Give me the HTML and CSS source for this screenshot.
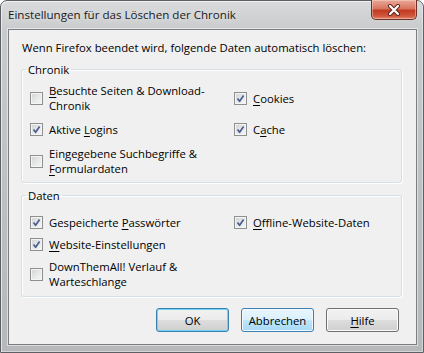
FILE: index.html
```html
<!DOCTYPE html>
<html lang="de">
<head>
    <meta charset="utf-8" />
    <title>Einstellungen für das Löschen der Chronik</title>
    <link rel="stylesheet" href="styles.css">
</head>
<body>
    <div class="window">
        <div class="titlebar">
            <span class="title">Einstellungen für das Löschen der Chronik</span>
            <span class="close">
                <svg width="14" height="12" viewBox="0 0 14 12">
                    <path d="M3 2 L11 10 M11 2 L3 10" stroke="#5a2418" stroke-width="4" stroke-linecap="round" fill="none" />
                    <path d="M3 2 L11 10 M11 2 L3 10" stroke="#ffffff" stroke-width="2.2" stroke-linecap="round" fill="none" />
                </svg>
            </span>
        </div>

        <div class="client">
            <p class="intro">Wenn Firefox beendet wird, folgende Daten automatisch löschen:</p>

            <fieldset class="group chronik">
                <legend>Chronik</legend>
                <div class="grid">
                    <label class="item"><span class="cb"></span><span><u>B</u>esuchte Seiten &amp; Download-<br>Chronik</span></label>
                    <label class="item"><span class="cb on"><svg viewBox="0 0 11 11"><path d="M2.5 5.5 L4.6 8.3 L8.6 2.4" /></svg></span><span><u>C</u>ookies</span></label>
                    <label class="item"><span class="cb on"><svg viewBox="0 0 11 11"><path d="M2.5 5.5 L4.6 8.3 L8.6 2.4" /></svg></span><span>Aktive <u>L</u>ogins</span></label>
                    <label class="item"><span class="cb on"><svg viewBox="0 0 11 11"><path d="M2.5 5.5 L4.6 8.3 L8.6 2.4" /></svg></span><span>C<u>a</u>che</span></label>
                    <label class="item"><span class="cb"></span><span>Eingegebene Suchbegriffe &amp;<br><u>F</u>ormulardaten</span></label>
                </div>
            </fieldset>

            <fieldset class="group daten">
                <legend>Daten</legend>
                <div class="grid">
                    <label class="item"><span class="cb on"><svg viewBox="0 0 11 11"><path d="M2.5 5.5 L4.6 8.3 L8.6 2.4" /></svg></span><span>Gespeicherte <u>P</u>asswörter</span></label>
                    <label class="item"><span class="cb on"><svg viewBox="0 0 11 11"><path d="M2.5 5.5 L4.6 8.3 L8.6 2.4" /></svg></span><span><u>O</u>ffline-Website-Daten</span></label>
                    <label class="item"><span class="cb on"><svg viewBox="0 0 11 11"><path d="M2.5 5.5 L4.6 8.3 L8.6 2.4" /></svg></span><span><u>W</u>ebsite-Einstellungen</span></label>
                    <span></span>
                    <label class="item"><span class="cb"></span><span>DownThemAll! Verlauf &amp;<br>Warteschlange</span></label>
                </div>
            </fieldset>

            <div class="buttons">
                <button class="btn default">OK</button>
                <button class="btn hover">Abbrechen</button>
                <button class="btn"><u>H</u>ilfe</button>
            </div>
        </div>
    </div>
</body>
</html>
```

FILE: styles.css
```css
* {
    margin: 0;
    padding: 0;
    box-sizing: border-box;
}

html, body {
    width: 424px;
    height: 353px;
    overflow: hidden;
}

body {
    font-family: "Open Sans", "Noto Sans", sans-serif;
    font-size: 11.3px;
    line-height: 15px;
    color: #000;
    background: #fff;
}

u {
    text-decoration: underline;
    text-underline-offset: 2px;
}

.window {
    height: 353px;
    display: flex;
    flex-direction: column;
    border: 1px solid #5c5f63;
    border-radius: 7px 7px 0 0;
    background: linear-gradient(180deg, #d8dadc 0%, #c8cacc 30px, #bcbec0 60%, #b6b8ba 100%);
    box-shadow: inset 1px 1px 0 rgba(255, 255, 255, 0.6), inset -1px -1px 0 rgba(255, 255, 255, 0.4);
}

.titlebar {
    height: 28px;
    display: flex;
    align-items: flex-start;
    padding-left: 7px;
}

.title {
    line-height: 28px;
    font-size: 11.6px;
    color: #1a1a1a;
    text-shadow: 0 0 8px rgba(255, 255, 255, 0.9);
}

.close {
    margin-left: auto;
    margin-right: 6px;
    margin-top: -1px;
    width: 46px;
    height: 20px;
    display: flex;
    align-items: center;
    justify-content: center;
    border: 1px solid #6b3127;
    border-top: none;
    border-radius: 0 0 5px 5px;
    background: linear-gradient(180deg, #e9a99a 0%, #d9755f 45%, #c13b22 55%, #d0573d 85%, #e08a6d 100%);
    box-shadow: inset 0 0 0 1px rgba(255, 220, 210, 0.45);
}

.client {
    flex: 1;
    margin: 0 6px 7px 7px;
    padding: 10px 14px 12px 12px;
    background: #f0f0f0;
    border: 1px solid #7a7d81;
    box-shadow: 0 0 0 1px rgba(255, 255, 255, 0.5);
    display: flex;
    flex-direction: column;
}

.intro {
    padding-left: 1px;
}

.group {
    border: 1px solid #d5dfe5;
    border-radius: 3px;
    padding: 6px 8px 6px;
    min-width: 0;
    box-shadow: 1px 1px 0 #fff, inset 1px 1px 0 #fff;
}

.group legend {
    margin-left: -4px;
    padding: 0 2px;
    line-height: 15px;
}

.chronik {
    margin-top: 7px;
}

.daten {
    margin-top: 5px;
    padding-top: 12px;
    padding-bottom: 7px;
}

.grid {
    display: grid;
    grid-template-columns: 204px 1fr;
    row-gap: 9px;
    align-items: center;
}

.daten .grid {
    row-gap: 7px;
}

.item {
    display: flex;
    align-items: center;
    gap: 6px;
}

.cb {
    flex: none;
    width: 13px;
    height: 13px;
    border: 1px solid #8e8f8f;
    background: linear-gradient(135deg, #cfd1d3 0%, #e6e7e8 50%, #f7f7f7 100%);
    box-shadow: inset 0 0 0 1px #f4f4f4;
}

.cb svg {
    display: block;
    width: 11px;
    height: 11px;
}

.cb svg path {
    fill: none;
    stroke: #4a5f8f;
    stroke-width: 1.7;
    stroke-linejoin: round;
}

.buttons {
    margin-top: 11px;
    display: flex;
    justify-content: flex-end;
    gap: 12px;
    padding-right: 3px;
}

.btn {
    width: 73px;
    height: 24px;
    font-family: inherit;
    font-size: 11.3px;
    color: #000;
    border: 1px solid #707070;
    border-radius: 3px;
    background: linear-gradient(180deg, #f2f2f2 0%, #ebebeb 50%, #dddddd 51%, #cfcfcf 100%);
    box-shadow: inset 0 0 0 1px #fbfbfb;
}

.btn.default {
    border-color: #3c7fb1;
    box-shadow: inset 0 0 0 1px #6ed6f5;
}

.btn.hover {
    border-color: #3c7fb1;
    background: linear-gradient(180deg, #eaf6fd 0%, #d9f0fc 50%, #bee6fd 51%, #a7d9f5 100%);
    box-shadow: inset 0 0 0 1px #f2fafe;
}
```
